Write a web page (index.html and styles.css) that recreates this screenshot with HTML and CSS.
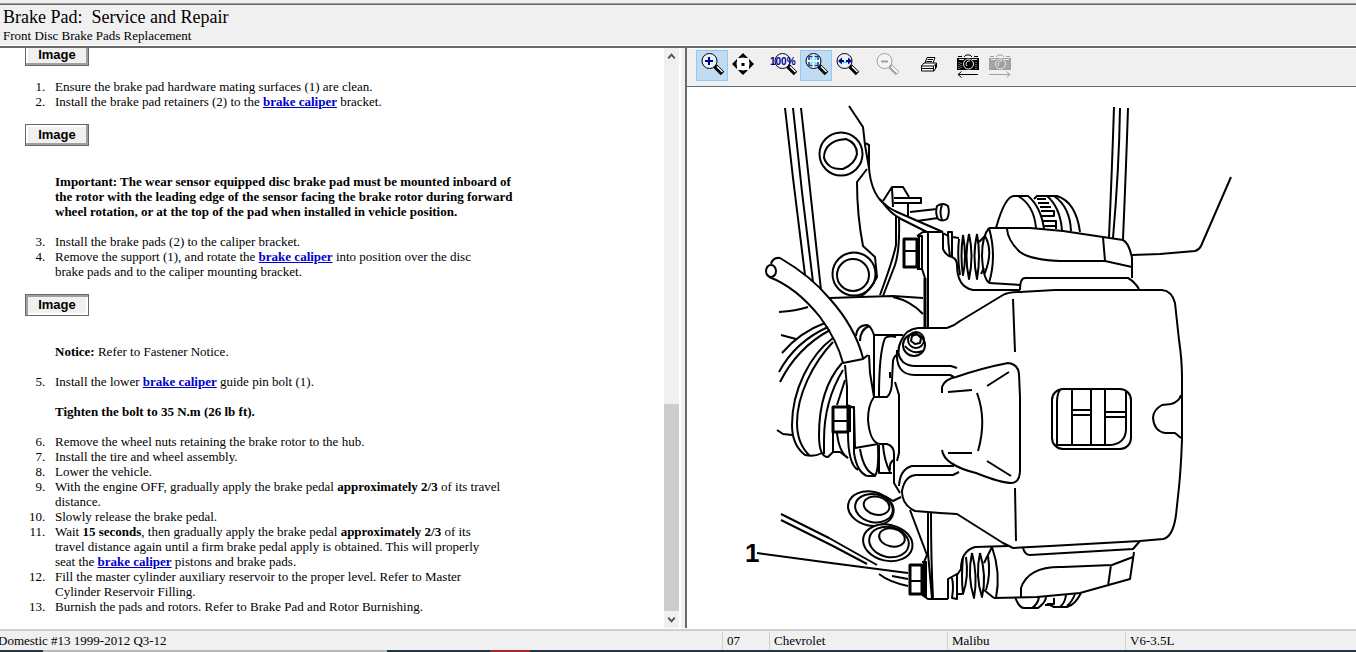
FILE: index.html
```html
<!DOCTYPE html>
<html lang="en">
<head>
<meta charset="utf-8">
<title>Brake Pad: Service and Repair</title>
<link rel="stylesheet" href="styles.css">
</head>
<body>
<svg class="symbols" aria-hidden="true">
  <symbol id="lens" viewBox="0 0 32 32">
    <path d="M19 16 L26.500 23.500" stroke="#000" stroke-width="5"/>
    <path d="M21 16.500 L26.500 22" stroke="#fff" stroke-width="1.500"/>
    <circle cx="13.500" cy="11" r="7.500" fill="#e8f4fd" stroke="#000"/>
  </symbol>
  <symbol id="camera" viewBox="0 0 32 32">
    <path d="M5 8 H27 V20 H5 Z" fill="currentColor"/>
    <path d="M6 6.500 H10 M12 7 L14 5 H18 L20 7 M22 6.500 H26" fill="none" stroke="currentColor"/>
    <path d="M7 9.500 H12 M20 9.500 H25" stroke="#eee"/>
    <path d="M7 12 V19 M9 13 V19 M24 12 V19" stroke="#bbb" stroke-dasharray="1 1"/>
    <circle cx="16.500" cy="14" r="5" fill="currentColor" stroke="#eee"/>
    <path d="M18 11 A3 3 0 0 0 15 16" fill="none" stroke="#eee"/>
  </symbol>
</svg>
<header class="title-bar">
  <h1>Brake Pad:&nbsp; Service and Repair</h1>
  <h2>Front Disc Brake Pads Replacement</h2>
</header>
<main class="panes">
  <section class="article-pane">
    <article class="article">
      <button class="image-button" type="button">Image</button>
      <ol class="steps">
        <li>Ensure the brake pad hardware mating surfaces (1) are clean.</li>
        <li>Install the brake pad retainers (2) to the <a href="#caliper">brake caliper</a> bracket.</li>
      </ol>
      <button class="image-button" type="button">Image</button>
      <p class="note note-first"><b>Important: The wear sensor equipped disc brake pad must be mounted inboard of<br>the rotor with the leading edge of the sensor facing the brake rotor during forward<br>wheel rotation, or at the top of the pad when installed in vehicle position.</b></p>
      <ol class="steps" start="3">
        <li>Install the brake pads (2) to the caliper bracket.</li>
        <li>Remove the support (1), and rotate the <a href="#caliper">brake caliper</a> into position over the disc<br>brake pads and to the caliper mounting bracket.</li>
      </ol>
      <button class="image-button pressed" type="button">Image</button>
      <p class="note note-first"><b>Notice:</b> Refer to Fastener Notice.</p>
      <ol class="steps" start="5">
        <li>Install the lower <a href="#caliper">brake caliper</a> guide pin bolt (1).</li>
      </ol>
      <p class="note"><b>Tighten the bolt to 35 N.m (26 lb ft).</b></p>
      <ol class="steps" start="6">
        <li>Remove the wheel nuts retaining the brake rotor to the hub.</li>
        <li>Install the tire and wheel assembly.</li>
        <li>Lower the vehicle.</li>
        <li>With the engine OFF, gradually apply the brake pedal <b>approximately 2/3</b> of its travel<br>distance.</li>
        <li>Slowly release the brake pedal.</li>
        <li>Wait <b>15 seconds</b>, then gradually apply the brake pedal <b>approximately 2/3</b> of its<br>travel distance again until a firm brake pedal apply is obtained. This will properly<br>seat the <a href="#caliper">brake caliper</a> pistons and brake pads.</li>
        <li>Fill the master cylinder auxiliary reservoir to the proper level. Refer to Master<br>Cylinder Reservoir Filling.</li>
        <li>Burnish the pads and rotors. Refer to Brake Pad and Rotor Burnishing.</li>
      </ol>
    </article>
    <div class="scrollbar">
      <button type="button" aria-label="Scroll up"><svg viewBox="0 0 16 16"><path d="M4.500 10 L8 6 L11.500 10"/></svg></button>
      <div class="track"><div class="thumb"></div></div>
      <button type="button" aria-label="Scroll down"><svg viewBox="0 0 16 16"><path d="M4.500 6 L8 10 L11.500 6"/></svg></button>
    </div>
  </section>
  <section class="viewer">
    <div class="toolbar">
      <div class="tool-group">
        <button class="tool active" type="button" aria-label="Zoom in"><svg viewBox="0 0 32 32"><use href="#lens"/><path d="M9 11 H17 M13 7 V15" stroke="#00008b" stroke-width="2"/></svg></button>
        <button class="tool" type="button" aria-label="Pan"><svg viewBox="0 0 32 32"><path d="M15 3 L20 8 H10 Z M15 25 L20 20 H10 Z M4 14 L9 9 V19 Z M26 14 L21 9 V19 Z"/><circle cx="15" cy="14" r="6.500" fill="#fff"/><path d="M13.500 13 h3 v3 h-3 z"/></svg></button>
      </div>
      <div class="tool-group">
        <button class="tool" type="button" aria-label="Actual size"><svg viewBox="0 0 32 32"><use href="#lens" x="1"/><text class="percent" x="2" y="15">100%</text></svg></button>
        <button class="tool active" type="button" aria-label="Fit page"><svg viewBox="0 0 32 32"><use href="#lens"/><path d="M9 10 V6.500 H12.500 M14.500 6.500 H18 V10 M18 12 V15.500 H14.500 M12.500 15.500 H9 V12" fill="none" stroke="#0a3a9a" stroke-width="1.500"/><path d="M10.500 8 L12.500 10 M16.500 8 L14.500 10 M16.500 14 L14.500 12 M10.500 14 L12.500 12" stroke="#00c8ff"/></svg></button>
        <button class="tool" type="button" aria-label="Fit width"><svg viewBox="0 0 32 32"><use href="#lens" x="-1"/><path d="M6 11 L10 7.500 V14.500 Z M20 11 L16 7.500 V14.500 Z" fill="#00008b"/><path d="M9 11 H17" stroke="#00008b" stroke-width="2" stroke-dasharray="3 2"/><path d="M11 12.500 H15" stroke="#00d8ff"/></svg></button>
      </div>
      <div class="tool-group">
        <button class="tool" type="button" aria-label="Zoom out"><svg viewBox="0 0 32 32"><path d="M18 16 L25.500 23.500" stroke="#a0a0a0" stroke-width="5"/><path d="M19.500 16.500 L25.500 22.500" stroke="#fff" stroke-width="2"/><circle cx="12.500" cy="11" r="7.500" fill="#f4f4f4" stroke="#a0a0a0"/><path d="M9 11.500 H16" stroke="#a0a0a0" stroke-width="2"/></svg></button>
      </div>
      <div class="tool-group">
        <button class="tool" type="button" aria-label="Print"><svg viewBox="0 0 32 32"><path d="M13 13 L15 7.500 H23 L21 13" fill="#fff" stroke="#000"/><path d="M15.500 9.500 H21 M14.500 11.500 H20" stroke="#000"/><path d="M9.500 16 L12 13 H24.500 V17 L22 21 H9.500 Z" fill="#fff" stroke="#000"/><path d="M9.500 16 H21.500 L24.500 13.500 M10 18.500 H22 M21.500 16 V21 M23.500 15 V19" fill="none" stroke="#000"/></svg></button>
      </div>
      <div class="tool-group">
        <button class="tool" type="button" aria-label="Previous image"><svg viewBox="0 0 32 32"><use href="#camera"/><path d="M6 24.500 H26 M9.500 21.500 L6 24.500 L9.500 27.500" fill="none" stroke="#000"/></svg></button>
        <button class="tool disabled" type="button" aria-label="Next image"><svg viewBox="0 0 32 32"><use href="#camera"/><path d="M5 24.500 H26 M22.500 21.500 L26 24.500 L22.500 27.500" fill="none" stroke="#a0a0a0"/></svg></button>
      </div>
    </div>
    <svg class="diagram" viewBox="687 87 669 541" preserveAspectRatio="xMinYMin meet" role="img" aria-label="Front brake caliper, guide pin bolt marked 1">
      <!-- strut and knuckle -->
      <path d="M785 108 L793 178 L805 275 M793 108 L802 192 L813 282 M801 108 L809 180 L821 290"/>
      <path d="M849 106 L863 127 L865 145 L869 168 Q871 192 883 203 M865 143 L869 145 V168"/>
      <circle cx="841" cy="154" r="21.500"/><path d="M846 139 Q857 143 857 154 Q855 164 843 169 Q828 170 824 158 Q824 144 839 140 Z"/>
      <path d="M867 169 L857 182 Q857 215 863 246 L875 257 L877 277 Q870 291 860 297"/>
      <circle cx="854" cy="274" r="21.500"/><circle cx="853" cy="275" r="16"/>
      <path d="M880 199 Q886 207 897 212 L943 232 M883 203 Q890 213 901 219 L927 232"/>
      <path d="M883 201 L892 187 H903 L909 197 M894 198 H921 V203 H894 M892 188 L893 207 M908 203 V216"/>
      <path d="M910 212 L937 209 M917 221 L938 218 M937 206 Q943 202 948 206 Q950 213 947 219 Q942 222 938 219 Q935 213 937 206 Z M942 205 Q939 212 942 220"/>
      <path d="M896 216 V245 Q893 260 880 295 M899 218 Q900 250 895 265 L883 296"/>
      <path d="M830 298 L860 297 L893 296 L923 298 M893 297 Q911 301 923 314"/>
      <!-- upper guide pin -->
      <path class="heavy" d="M904 239 H917 V267 H904 Z"/><path d="M905 251 H916 M917 236 H922 V269 H917 M919 237 V268 M917 236 L923 232 H943 M922 269 L925 278"/>
      <path class="heavy" d="M925 278 V328"/><path d="M928 233 V328"/>
      <path d="M943 233 V249 Q946 256 952 257 V232 H948 Q948 245 950 256 M943 233 L948 236 M952 257 Q957 259 957 265 Q957 287 973 290 H1010 L1020 290 M952 237 L959 238"/>
      <path d="M959 239 Q957 257 960 275 M963 235 Q960 257 963 275 Q967 257 963 235 M969 234 Q964 256 969 279 Q974 256 969 234 M977 234 Q972 256 977 279 Q981 256 977 234 M979 242 L985 236 M981 274 L984 268"/>
      <path d="M989 228 Q982 236 982 256 Q983 278 989 283 M989 228 Q997 256 989 283 M985 236 Q994 252 984 275"/>
      <path d="M989 228 H1030 L1063 231 L1103 237 L1123 240 Q1129 243 1132 258 V278 M989 283 L1020 285 M1103 237 L1105 261 L1132 267 M1007 229 Q1008 241 1020 252 Q1031 260 1060 261 H1105"/>
      <path d="M1020 290 Q1020 278 1025 278 L1128 278 Q1134 281 1139 289"/>
      <path d="M996 228 Q1005 196 1014 196 H1028 Q1041 207 1044 229 M1018 196 Q1034 205 1036 228 M1034 199 L1037 196 H1057 Q1076 202 1080 232 M1047 196 Q1060 207 1062 230 M1054 196 Q1070 207 1071 231"/>
      <path d="M1037 199 H1046 M1038 203 H1049 M1040 207 H1051 M1041 211 H1054 V216 H1042 M1042 221 H1056 V229 M1043 226 H1057"/>
      <path d="M1114 107 Q1112 170 1109 237 M1120 108 Q1119 170 1113 238 M1128 108 Q1126 170 1123 239"/>
      <path d="M1132 255 L1160 254 L1195 251 Q1199 250 1201 246 L1231 177"/>
      <!-- hose and rotor -->
      <ellipse cx="771" cy="271" rx="5" ry="6"/>
      <path d="M771 264 Q773 257 780 258 Q811 276 830 299 Q855 327 863 358 M769 277 Q796 287 820 317 Q837 340 843 363 L863 359 L868 355"/>
      <path d="M779 312 Q796 311 808 307 M781 335 L796 339 M782 353 Q800 332 825 323 M779 372 Q795 342 828 327 M780 382 Q797 348 830 330"/>
      <path d="M833 338 C810 355 792 390 792 425 Q792 445 805 455 Q815 457 822 453 M833 342 C813 363 797 395 797 423 Q797 444 810 456"/>
      <path d="M842 363 C827 380 819 405 819 435 Q819 457 828 457 L833 452 H840 L848 458 M843 370 C832 388 824 410 824 440 L824 454 M845 380 L837 405"/>
      <path class="heavy" d="M833 407 H848 V432 H833 Z"/><path d="M833 421 H848 M850 407 V432 M849 407 H854 V433 M833 432 V453 M837 433 Q839 452 848 458 M848 433 Q848 464 858 470 M854 433 V453 Q857 472 867 476 M860 449 Q864 472 875 475 M867 476 H875 Q879 470 878 445"/>
      <path d="M777 430 L783 434 L792 435 M845 365 L847 387 V405 L854 408 L855 448 L878 444 M869 355 L870 373 L874 397"/>
      <path d="M856 336 Q857 325 867 325 Q871 326 874 335 M860 341 Q860 330 869 326 M874 335 H903 M874 335 V397 M885 338 Q879 353 879 396 M885 338 Q889 335 896 337 M874 397 H887 Q892 393 892 380 L893 361 Q894 356 897 355"/>
      <path d="M874 397 Q868 405 868 420 Q870 443 880 444 H887 Q894 446 894 454 V483 L900 493 M879 445 V473 H892 M883 445 Q884 460 890 472 M890 470 Q889 462 894 460 M890 372 V378"/>
      <!-- caliper housing -->
      <circle cx="914" cy="345" r="11"/><circle cx="916" cy="340" r="8"/><path d="M912 336 L917 334 L921 338 L920 343 L915 344 L911 341 Z"/><path d="M905 346 Q912 355 923 351"/>
      <path d="M947 328 H918 Q906 329 901 341 Q895 354 903 362 Q908 366 915 366 H951 L957 368 M897 350 Q895 375 915 375 H950 L954 377"/>
      <path d="M947 328 Q954 326 960 321 L1003 295 Q1008 292 1020 292 L1055 290 H1162 Q1172 291 1175 303 L1179 340 Q1182 360 1182 377 V440 Q1181 467 1179 487 L1176 515 Q1173 537 1163 539 L1140 541 L1050 546 L1013 548 L1003 543 L957 514 L940 513 L915 511 Q902 505 902 491 Q905 475 917 475 H953 L959 472 M954 466 H912 Q900 469 899 486"/>
      <path d="M895 382 L899 395 V453 L897 461 M1013 299 L1015 352 M1015 488 L1016 541"/>
      <path d="M942 393 V387 Q945 379 956 377 Q982 368 1008 363 Q1018 364 1019 374 L1020 397 V470 Q1020 482 1012 483 Q1001 483 976 473 Q944 465 942 450"/>
      <path d="M948 392 L972 390 M987 386 L1009 372 M977 393 Q987 420 978 451 M948 453 H972 M987 461 L1011 476"/>
      <rect x="1052" y="389" width="79" height="60" rx="11"/><path d="M1060 390 Q1057 394 1057 402 V445 M1054 445 H1110 Q1125 444 1126 430 V391 M1072 389 V445 M1091 389 V445 M1105 389 V445 M1072 410 H1091 M1072 415 H1091 M1105 412 H1126 M1105 417 H1126"/>
      <path d="M1181 395 Q1179 402 1171 404 L1162 405 Q1153 410 1153 418 Q1154 431 1165 433 L1175 433 L1181 438"/>
      <!-- lower mount and guide pin -->
      <g transform="rotate(12 873 508)"><ellipse cx="871" cy="509" rx="23" ry="17"/><ellipse cx="874" cy="508" rx="19" ry="14"/><ellipse cx="876" cy="505" rx="13" ry="9"/></g>
      <g transform="rotate(12 889 542)"><ellipse cx="888" cy="543" rx="25" ry="18" fill="#fff"/><ellipse cx="889" cy="542" rx="20" ry="15"/><ellipse cx="891" cy="537" rx="13" ry="9"/></g>
      <path d="M885 496 L893 501 L901 497 M910 510 L927 555 L924 562 M928 513 V553 L932 599 M931 513 Q931 560 933 598"/>
      <path d="M781 514 L829 538 L877 565 M781 520 L833 546 L867 564 M757 553 L831 563 L908 573 M879 574 Q889 582 908 586 M892 576 L908 579"/>
      <path class="heavy" d="M910 565 H922 V594 H910 Z"/><path d="M911 581 H922 M922 562 H926 V597 M924 562 V596 M922 595 L928 599 H948"/>
      <path d="M948 599 V579 L957 574 V599 L952 598 Q954 586 952 578 M957 575 L961 569 Q961 551 975 547 L1008 546"/>
      <path d="M957 594 H962 M963 557 Q961 577 963 594 Q969 577 966 557 M972 553 Q967 576 974 598 Q978 576 972 553 M980 553 Q975 576 982 597 Q987 576 980 553 M984 563 L992 547 M984 590 L994 598"/>
      <path d="M992 547 Q1001 573 996 598 M988 556 Q991 575 986 590"/>
      <path d="M994 598 L1037 597 L1080 593 L1130 579 L1134 552 M1023 548 Q1025 555 1030 555 L1133 549 L1140 541 M1021 597 V588 Q1028 566 1063 567 L1112 565 L1133 557 M1111 565 L1108 586"/>
      <path d="M1015 597 Q1019 608 1024 608 H1038 Q1046 602 1046 597 M1032 608 Q1038 604 1039 597 M1045 605 H1050 L1054 607 H1067 Q1075 605 1081 593 M1060 607 Q1065 603 1066 595 M1067 606 Q1072 602 1075 594 M1054 598 V604 H1047"/>
      <text class="callout" x="745" y="562">1</text>
    </svg>
  </section>
</main>
<footer class="status-bar">
  <span class="status-edition">Domestic #13 1999-2012 Q3-12</span>
  <span class="status-year">07</span>
  <span class="status-make">Chevrolet</span>
  <span class="status-make">Malibu</span>
  <span class="status-engine">V6-3.5L</span>
</footer>
<div class="taskbar-edge"></div>
</body>
</html>
```
FILE: styles.css
```css
* { box-sizing: border-box; }

body {
  margin: 0;
  height: 100vh;
  display: flex;
  flex-direction: column;
  overflow: hidden;
  background: #f0f0f0;
  color: #000;
  font: 13px/15px "Liberation Serif", "Times New Roman", serif;
}

button { font: inherit; padding: 0; margin: 0; }

.symbols { position: absolute; width: 0; height: 0; }

.title-bar {
  margin-top: 3px;
  padding: 2px 3px 3px;
  border-top: 1px solid #a0a0a0;
  border-bottom: 2px solid #696969;
  box-shadow: inset 0 1px #696969, inset 0 -1px #fff;
}
.title-bar h1 { margin: 0; font-size: 18px; line-height: 22px; font-weight: 400; }
.title-bar h2 { margin: 0; font-size: 13px; line-height: 15px; font-weight: 400; }

.panes { flex: 1; min-height: 0; display: flex; }

.article-pane {
  flex: 0 0 calc(50% + 3px);
  display: flex;
  background: #fff;
  border-right: 2px solid #fff;
}
.article {
  flex: 1;
  min-width: 0;
  display: flex;
  flex-direction: column;
  justify-content: flex-end;
  overflow: hidden;
  padding: 0 24px 14px 25px;
}
.article > * { flex: none; max-width: 520px; }
.article a { color: #0000cc; font-weight: 700; }

.image-button {
  width: 64px;
  height: 22px;
  background: #f0f0f0;
  border: 1px solid #696969;
  box-shadow: inset -2px -2px #a0a0a0, inset 2px 2px #fff;
  font: 700 13px/20px "Liberation Sans", Arial, sans-serif;
}
.image-button.pressed { box-shadow: inset 2px 2px #a0a0a0, inset -2px -2px #fff; }

.steps { margin: 13px 0 15px; padding-left: 30px; }
.steps li::marker { content: counter(list-item) ".\a0\a0\a0"; }
.note { margin: 0; padding-left: 30px; }
.note-first { margin-top: 28px; }
.note + .steps { margin-top: 15px; }
.steps:last-child { margin-bottom: 0; }

.scrollbar {
  width: 15px;
  display: flex;
  flex-direction: column;
  background: #f0f0f0;
}
.scrollbar button { height: 17px; border: 0; background: #f0f0f0; }
.scrollbar svg { display: block; width: 15px; height: 17px; fill: none; stroke: #505050; stroke-width: 2; }
.track { flex: 1; display: flex; flex-direction: column; justify-content: flex-end; }
.thumb { height: 38%; background: #cdcdcd; }

.viewer {
  flex: 1;
  min-width: 0;
  display: flex;
  flex-direction: column;
  margin-left: 4px;
  background: #fff;
  border-left: 2px solid #696969;
}
.toolbar {
  display: flex;
  gap: 8px;
  padding: 2px 9px 5px;
  background: #f0f0f0;
  border-bottom: 1px solid #696969;
  box-shadow: inset 0 1px #fff;
}
.tool-group { display: flex; }
.tool {
  width: 32px;
  height: 31px;
  border: 0;
  background: transparent;
  color: #000;
}
.tool.active { background: #c0dcf3; box-shadow: inset 0 0 0 1px #90c8f6; }
.tool.disabled { color: #a0a0a0; }
.tool svg { display: block; width: 32px; height: 32px; }
.percent { font: 700 10px "Liberation Sans", Arial, sans-serif; fill: #00008b; }

.diagram { flex: 1; min-height: 0; width: 100%; fill: none; stroke: #000; stroke-width: 2; stroke-linejoin: round; }
.heavy { stroke-width: 3; }
.callout { font: 700 26px "Liberation Sans", Arial, sans-serif; fill: #000; stroke: none; }

.status-bar {
  display: flex;
  height: 22px;
  border-top: 1px solid #fff;
  box-shadow: inset 0 2px #d0d0d0;
  padding-top: 3px;
  line-height: 17px;
}
.status-bar span { padding-left: 4px; border-left: 1px solid #d0d0d0; }
.status-bar .status-edition { width: 724px; padding: 0; margin-left: -2px; border: 0; }
.status-bar .status-year { width: 47px; }
.status-bar .status-make { width: 178px; }
.status-bar .status-engine { flex: 1; }

.taskbar-edge {
  height: 2px;
  background: linear-gradient(90deg, #24363f 43px, #b8b8b8 43px 387px, #24363f 387px 490px, #a52a30 490px 530px, #24363f 530px);
}
```
